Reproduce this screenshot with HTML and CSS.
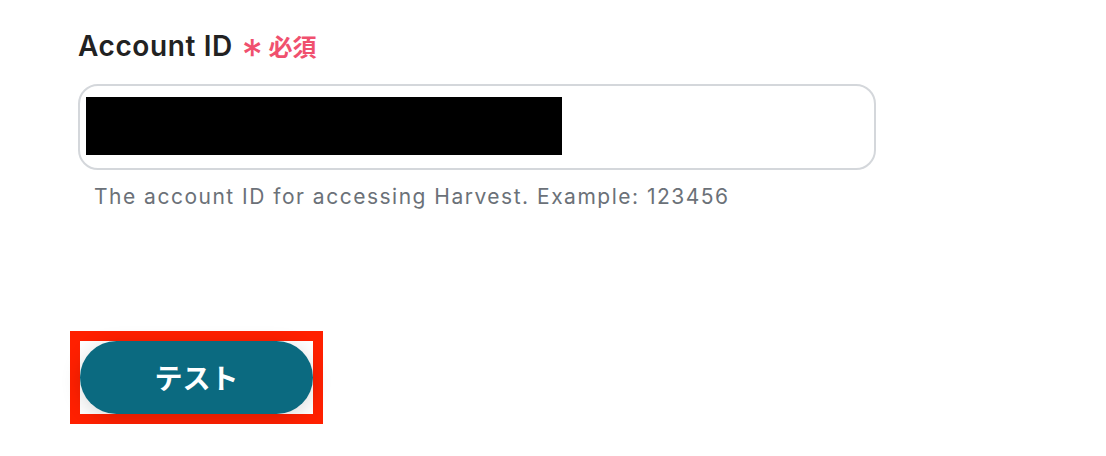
FILE: index.html
```html
<!DOCTYPE html>
<html lang="ja">
<head>
  <meta charset="UTF-8" />
  <meta name="viewport" content="width=device-width, initial-scale=1.0"/>
  <title>Account ID</title>
  <link rel="stylesheet" href="styles.css">
</head>
<body>
  <div class="form">
    <div class="field">
      <label class="field-label" for="account-id">
        Account ID
        <span class="required-mark">*</span>
        <span class="required-text">必須</span>
      </label>
      <div class="input-box" id="account-id">
        <div class="redacted"></div>
      </div>
      <p class="help">The account ID for accessing Harvest. Example: 123456</p>
    </div>

    <div class="actions">
      <div class="highlight">
        <button class="test-btn">テスト</button>
      </div>
    </div>
  </div>
</body>
</html>
```

FILE: styles.css
```css
body {
  margin: 0;
  background: #fff;
  font-family: Inter, "Noto Sans CJK JP", sans-serif;
}

.form {
  padding: 26px 0 0 78px;
}

.field {
  width: 798px;
}

.field-label {
  display: flex;
  align-items: center;
  font-size: 28px;
  font-weight: 600;
  color: #222;
  line-height: 40px;
  letter-spacing: 0.6px;
}

.required-mark {
  color: #f0506e;
  font-size: 42px;
  font-weight: 400;
  margin-left: 9px;
  line-height: 40px;
  position: relative;
  top: 9px;
}

.required-text {
  color: #f0506e;
  font-family: "Noto Sans CJK JP", sans-serif;
  font-size: 24px;
  font-weight: 700;
  margin-left: 5px;
  letter-spacing: 0;
}

.input-box {
  margin-top: 18px;
  height: 86px;
  box-sizing: border-box;
  border: 2px solid #d4d7db;
  border-radius: 20px;
  padding: 11px 0 0 6px;
}

.redacted {
  width: 476px;
  height: 58px;
  background: #000;
}

.help {
  margin: 14px 0 0 16px;
  font-size: 21px;
  color: #6b7178;
  letter-spacing: 1.5px;
}

.actions {
  margin-top: 122px;
}

.highlight {
  display: inline-block;
  margin-left: -8px;
  border: 10px solid #ff2000;
}

.test-btn {
  display: block;
  width: 233px;
  height: 73px;
  padding-bottom: 3px;
  border: none;
  border-radius: 37px;
  background: #0b6a80;
  color: #fff;
  font-family: "Noto Sans CJK JP", sans-serif;
  font-size: 28px;
  font-weight: 700;
  box-shadow: 0 4px 20px rgba(0, 0, 0, 0.15);
}
```
